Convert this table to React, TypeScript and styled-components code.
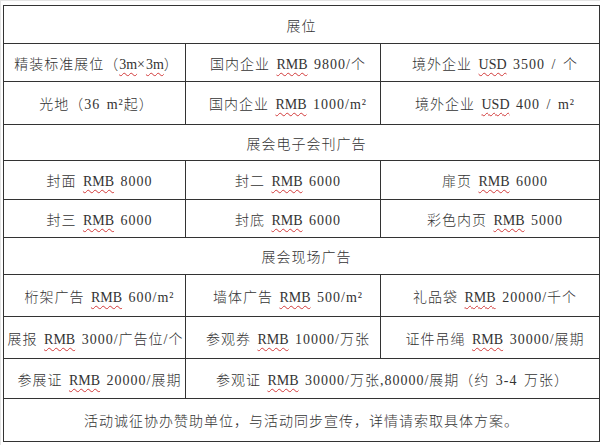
import React from "react"
import styled, { createGlobalStyle } from "styled-components"

const GlobalStyle = createGlobalStyle`
  html, body {
    margin: 0;
    padding: 0;
    background: #ffffff;
  }
`

const Page = styled.div`
  width: 600px;
  height: 445px;
  box-sizing: border-box;
  padding: 4px 0 0 2px;
  border-top: 1px solid #e4e4e4;
  border-left: 1px solid #e4e4e4;
`

const Frame = styled.div`
  width: 597px;
  border-right: 1px solid #333;
  box-sizing: border-box;
`

const Table = styled.table`
  width: 596px;
  border-collapse: collapse;
  table-layout: fixed;
  font-family: "Liberation Serif", "Noto Sans CJK SC", serif;
  font-size: 14px;
  font-weight: 300;
  color: #333;
  letter-spacing: 1px;
  word-spacing: 2px;
`

const Row = styled.tr<{ $h: number }>`
  height: ${(p) => p.$h}px;
`

const Cell = styled.td<{ $shift?: number }>`
  border: 1px solid #333;
  text-align: center;
  vertical-align: middle;
  white-space: nowrap;
  padding: 0 0 0 ${(p) => p.$shift ?? 10}px;
  overflow: visible;
`

const Mark = styled.span`
  text-decoration: underline wavy #d23a3a;
  text-decoration-thickness: 1px;
  text-underline-offset: 3px;
  letter-spacing: 0;
`

const R = () => <Mark>RMB</Mark>
const U = () => <Mark>USD</Mark>

type Item = { key: string; node: React.ReactNode; span?: number; shift?: number }
type Line = { h: number; cells: Item[] }

const rows: Line[] = [
  { h: 38, cells: [{ key: "h1", node: "展位", span: 3, shift: 0 }] },
  {
    h: 38,
    cells: [
      { key: "a", node: <>精装标准展位（<Mark>3m</Mark>×<Mark>3m</Mark>）</>, shift: 4 },
      { key: "b", node: <>国内企业 <R /> 9800/个</> },
      { key: "c", node: <>境外企业 <U /> 3500 / 个</> },
    ],
  },
  {
    h: 43,
    cells: [
      { key: "a", node: "光地（36 m²起）", shift: 4 },
      { key: "b", node: <>国内企业 <R /> 1000/m²</> },
      { key: "c", node: <>境外企业 <U /> 400 / m²</> },
    ],
  },
  { h: 36, cells: [{ key: "h2", node: "展会电子会刊广告", span: 3, shift: 10 }] },
  {
    h: 39,
    cells: [
      { key: "a", node: <>封面 <R /> 8000</> },
      { key: "b", node: <>封二 <R /> 6000</> },
      { key: "c", node: <>扉页 <R /> 6000</> },
    ],
  },
  {
    h: 38,
    cells: [
      { key: "a", node: <>封三 <R /> 6000</> },
      { key: "b", node: <>封底 <R /> 6000</> },
      { key: "c", node: <>彩色内页 <R /> 5000</> },
    ],
  },
  { h: 37, cells: [{ key: "h3", node: "展会现场广告", span: 3, shift: 10 }] },
  {
    h: 42,
    cells: [
      { key: "a", node: <>桁架广告 <R /> 600/m²</> },
      { key: "b", node: <>墙体广告 <R /> 500/m²</> },
      { key: "c", node: <>礼品袋 <R /> 20000/千个</> },
    ],
  },
  {
    h: 42,
    cells: [
      { key: "a", node: <>展报 <R /> 3000/广告位/个</>, shift: 2 },
      { key: "b", node: <>参观券 <R /> 10000/万张</> },
      { key: "c", node: <>证件吊绳 <R /> 30000/展期</> },
    ],
  },
  {
    h: 40,
    cells: [
      { key: "a", node: <>参展证 <R /> 20000/展期</> },
      { key: "b", node: <>参观证 <R /> 30000/万张,80000/展期（约 3-4 万张）</>, span: 2, shift: 0 },
    ],
  },
  {
    h: 43,
    cells: [
      { key: "f", node: "活动诚征协办赞助单位，与活动同步宣传，详情请索取具体方案。", span: 3, shift: 0 },
    ],
  },
]

export default function App() {
  return (
    <>
      <GlobalStyle />
      <Page>
        <Frame>
          <Table>
            <colgroup>
              <col style={{ width: 182 }} />
              <col style={{ width: 195 }} />
              <col style={{ width: 219 }} />
            </colgroup>
            <tbody>
              {rows.map((row, i) => (
                <Row key={i} $h={row.h}>
                  {row.cells.map((c) => (
                    <Cell key={c.key} colSpan={c.span} $shift={c.shift}>
                      {c.node}
                    </Cell>
                  ))}
                </Row>
              ))}
            </tbody>
          </Table>
        </Frame>
      </Page>
    </>
  )
}
